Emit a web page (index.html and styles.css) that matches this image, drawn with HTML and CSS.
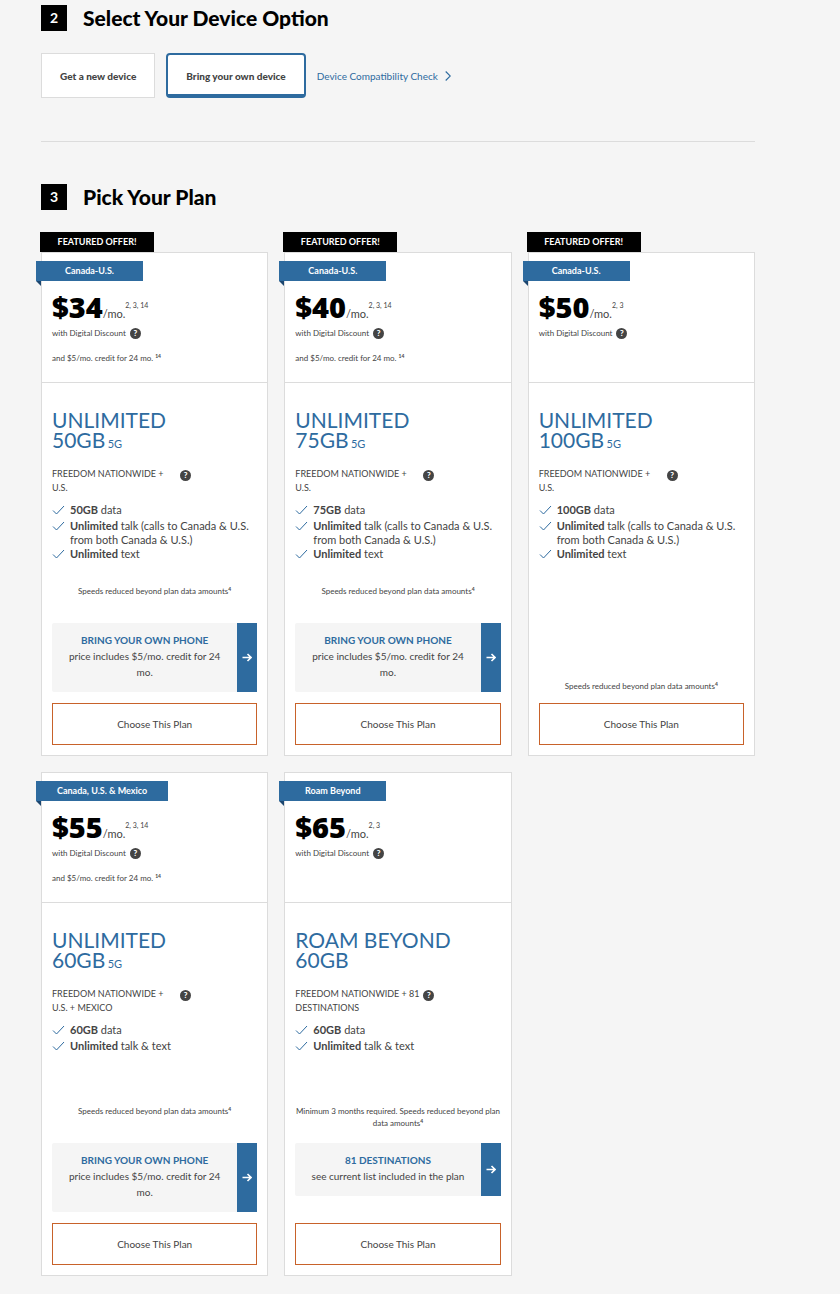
FILE: index.html
```html
<!DOCTYPE html>
<html lang="en">
<head>
    <meta charset="UTF-8">
    <meta name="viewport" content="width=device-width, initial-scale=1.0">
    <title>Pick Your Plan</title>
    <link rel="stylesheet" href="styles.css">
</head>
<body>
    <svg width="0" height="0" class="sprite" aria-hidden="true">
        <symbol id="check" viewBox="0 0 12 10"><path d="M0.5 5.5 L4 9 L11.5 1" fill="none" stroke="#2e6b9f" stroke-width="1"/></symbol>
        <symbol id="arrow" viewBox="0 0 10 9"><path d="M0.5 4.5 H9 M5.5 1 L9 4.5 L5.5 8" fill="none" stroke="#fff" stroke-width="1.6"/></symbol>
    </svg>
    <main class="page">
        <section class="device">
            <h2 class="step-title"><span class="step-number">2</span>Select Your Device Option</h2>
            <div class="device-options">
                <button class="device-btn">Get a new device</button>
                <button class="device-btn selected">Bring your own device</button>
                <a class="compat-link" href="#">Device Compatibility Check
                    <svg width="6" height="10" viewBox="0 0 6 10"><path d="M0.7 0.5 L5.3 5 L0.7 9.5" fill="none" stroke="#2e6b9f" stroke-width="1.1"/></svg>
                </a>
            </div>
        </section>

        <section class="plans">
            <h2 class="step-title"><span class="step-number">3</span>Pick Your Plan</h2>
            <div class="plan-grid">

                <div class="plan">
                    <div class="featured">FEATURED OFFER!</div>
                    <article class="card">
                        <div class="card-top">
                            <div class="ribbon">Canada-U.S.</div>
                            <div class="price"><strong>$34</strong><span>/mo.</span><sup>2, 3, 14</sup></div>
                            <div class="discount">with Digital Discount <button class="help" aria-label="About Digital Discount">?</button></div>
                            <div class="credit">and $5/mo. credit for 24 mo. <sup>14</sup></div>
                        </div>
                        <div class="card-body">
                            <h3 class="plan-name">UNLIMITED<br>50GB <small>5G</small></h3>
                            <div class="network"><span>FREEDOM NATIONWIDE + U.S.</span><button class="help" aria-label="About the network">?</button></div>
                            <ul class="features">
                                <li><svg><use href="#check"/></svg><span><b>50GB</b> data</span></li>
                                <li><svg><use href="#check"/></svg><span><b>Unlimited</b> talk (calls to Canada &amp; U.S. from both Canada &amp; U.S.)</span></li>
                                <li><svg><use href="#check"/></svg><span><b>Unlimited</b> text</span></li>
                            </ul>
                            <p class="note">Speeds reduced beyond plan data amounts<sup>4</sup></p>
                            <div class="promo-slot">
                                <a class="promo" href="#"><span class="promo-text"><b>BRING YOUR OWN PHONE</b>price includes $5/mo. credit for 24 mo.</span><span class="promo-arrow"><svg><use href="#arrow"/></svg></span></a>
                            </div>
                            <button class="choose">Choose This Plan</button>
                        </div>
                    </article>
                </div>

                <div class="plan">
                    <div class="featured">FEATURED OFFER!</div>
                    <article class="card">
                        <div class="card-top">
                            <div class="ribbon">Canada-U.S.</div>
                            <div class="price"><strong>$40</strong><span>/mo.</span><sup>2, 3, 14</sup></div>
                            <div class="discount">with Digital Discount <button class="help" aria-label="About Digital Discount">?</button></div>
                            <div class="credit">and $5/mo. credit for 24 mo. <sup>14</sup></div>
                        </div>
                        <div class="card-body">
                            <h3 class="plan-name">UNLIMITED<br>75GB <small>5G</small></h3>
                            <div class="network"><span>FREEDOM NATIONWIDE + U.S.</span><button class="help" aria-label="About the network">?</button></div>
                            <ul class="features">
                                <li><svg><use href="#check"/></svg><span><b>75GB</b> data</span></li>
                                <li><svg><use href="#check"/></svg><span><b>Unlimited</b> talk (calls to Canada &amp; U.S. from both Canada &amp; U.S.)</span></li>
                                <li><svg><use href="#check"/></svg><span><b>Unlimited</b> text</span></li>
                            </ul>
                            <p class="note">Speeds reduced beyond plan data amounts<sup>4</sup></p>
                            <div class="promo-slot">
                                <a class="promo" href="#"><span class="promo-text"><b>BRING YOUR OWN PHONE</b>price includes $5/mo. credit for 24 mo.</span><span class="promo-arrow"><svg><use href="#arrow"/></svg></span></a>
                            </div>
                            <button class="choose">Choose This Plan</button>
                        </div>
                    </article>
                </div>

                <div class="plan">
                    <div class="featured">FEATURED OFFER!</div>
                    <article class="card">
                        <div class="card-top">
                            <div class="ribbon">Canada-U.S.</div>
                            <div class="price"><strong>$50</strong><span>/mo.</span><sup>2, 3</sup></div>
                            <div class="discount">with Digital Discount <button class="help" aria-label="About Digital Discount">?</button></div>
                        </div>
                        <div class="card-body">
                            <h3 class="plan-name">UNLIMITED<br>100GB <small>5G</small></h3>
                            <div class="network"><span>FREEDOM NATIONWIDE + U.S.</span><button class="help" aria-label="About the network">?</button></div>
                            <ul class="features">
                                <li><svg><use href="#check"/></svg><span><b>100GB</b> data</span></li>
                                <li><svg><use href="#check"/></svg><span><b>Unlimited</b> talk (calls to Canada &amp; U.S. from both Canada &amp; U.S.)</span></li>
                                <li><svg><use href="#check"/></svg><span><b>Unlimited</b> text</span></li>
                            </ul>
                            <p class="note note-last">Speeds reduced beyond plan data amounts<sup>4</sup></p>
                            <button class="choose">Choose This Plan</button>
                        </div>
                    </article>
                </div>

                <div class="plan">
                    <article class="card">
                        <div class="card-top">
                            <div class="ribbon">Canada, U.S. &amp; Mexico</div>
                            <div class="price"><strong>$55</strong><span>/mo.</span><sup>2, 3, 14</sup></div>
                            <div class="discount">with Digital Discount <button class="help" aria-label="About Digital Discount">?</button></div>
                            <div class="credit">and $5/mo. credit for 24 mo. <sup>14</sup></div>
                        </div>
                        <div class="card-body">
                            <h3 class="plan-name">UNLIMITED<br>60GB <small>5G</small></h3>
                            <div class="network"><span>FREEDOM NATIONWIDE + U.S. + MEXICO</span><button class="help" aria-label="About the network">?</button></div>
                            <ul class="features">
                                <li><svg><use href="#check"/></svg><span><b>60GB</b> data</span></li>
                                <li><svg><use href="#check"/></svg><span><b>Unlimited</b> talk &amp; text</span></li>
                            </ul>
                            <p class="note">Speeds reduced beyond plan data amounts<sup>4</sup></p>
                            <div class="promo-slot">
                                <a class="promo" href="#"><span class="promo-text"><b>BRING YOUR OWN PHONE</b>price includes $5/mo. credit for 24 mo.</span><span class="promo-arrow"><svg><use href="#arrow"/></svg></span></a>
                            </div>
                            <button class="choose">Choose This Plan</button>
                        </div>
                    </article>
                </div>

                <div class="plan">
                    <article class="card">
                        <div class="card-top">
                            <div class="ribbon">Roam Beyond</div>
                            <div class="price"><strong>$65</strong><span>/mo.</span><sup>2, 3</sup></div>
                            <div class="discount">with Digital Discount <button class="help" aria-label="About Digital Discount">?</button></div>
                        </div>
                        <div class="card-body">
                            <h3 class="plan-name">ROAM BEYOND<br>60GB</h3>
                            <div class="network"><span>FREEDOM NATIONWIDE + 81 DESTINATIONS</span><button class="help" aria-label="About the network">?</button></div>
                            <ul class="features">
                                <li><svg><use href="#check"/></svg><span><b>60GB</b> data</span></li>
                                <li><svg><use href="#check"/></svg><span><b>Unlimited</b> talk &amp; text</span></li>
                            </ul>
                            <p class="note">Minimum 3 months required. Speeds reduced beyond plan data amounts<sup>4</sup></p>
                            <div class="promo-slot">
                                <a class="promo" href="#"><span class="promo-text"><b>81 DESTINATIONS</b>see current list included in the plan</span><span class="promo-arrow"><svg><use href="#arrow"/></svg></span></a>
                            </div>
                            <button class="choose">Choose This Plan</button>
                        </div>
                    </article>
                </div>

            </div>
        </section>
    </main>
</body>
</html>
```

FILE: styles.css
```css
* {
    box-sizing: border-box;
}

body {
    background-color: #f5f5f5;
    color: #444;
    font-family: Lato, "Open Sans", sans-serif;
    font-size: 11px;
    line-height: 14px;
    margin: 0;
}

button {
    font-family: inherit;
    color: inherit;
    cursor: pointer;
}

a {
    color: #2e6b9f;
    text-decoration: none;
}

sup {
    line-height: 0;
}

.sprite {
    display: block;
}

.page {
    margin: 0 85px 0 41px;
    padding: 5px 0 17px;
}

.step-title {
    display: flex;
    align-items: center;
    gap: 16px;
    margin: 0;
    color: #000;
    font-size: 21px;
    font-weight: 900;
    line-height: 26px;
}

.step-number {
    width: 26px;
    background-color: #000;
    color: #fff;
    font-size: 14px;
    font-weight: bold;
    text-align: center;
}

.device {
    padding-bottom: 43px;
    border-bottom: 1px solid #dcdcdc;
}

.device-options {
    display: flex;
    align-items: center;
    gap: 11px;
    margin-top: 22px;
}

.device-btn {
    height: 45px;
    padding: 0 18px;
    background-color: #fff;
    border: 1px solid #dcdcdc;
    font-size: 10px;
    font-weight: 900;
}

.device-btn.selected {
    padding: 2px 18px 0;
    border: 2px solid #2e6b9f;
    border-bottom-width: 4px;
    border-radius: 4px;
}

.compat-link {
    display: flex;
    align-items: center;
    gap: 7px;
    font-size: 10px;
}

.plans {
    padding-top: 42px;
}

.plan-grid {
    display: grid;
    grid-template-columns: repeat(3, 1fr);
    gap: 16px;
    margin-top: 22px;
}

.plan {
    display: flex;
    flex-direction: column;
}

.featured {
    align-self: flex-start;
    width: 114px;
    margin-left: -1px;
    background-color: #000;
    color: #fff;
    font-size: 9px;
    font-weight: bold;
    line-height: 20px;
    text-align: center;
}

.card {
    flex: 1;
    display: flex;
    flex-direction: column;
    background-color: #fff;
    border: 1px solid #dcdcdc;
}

.card-top {
    min-height: 130px;
    padding: 8px 10px;
    border-bottom: 1px solid #dcdcdc;
}

.ribbon {
    position: relative;
    width: fit-content;
    min-width: 107px;
    margin-left: -16px;
    padding: 0 21px;
    background-color: #2e6b9f;
    color: #fff;
    font-size: 9px;
    font-weight: bold;
    line-height: 20px;
    text-align: center;
}

/* folded corner under the ribbon */
.ribbon::after {
    content: "";
    position: absolute;
    top: 100%;
    left: 0;
    border-top: 5px solid #1c466f;
    border-left: 5px solid transparent;
}

.price {
    display: flex;
    align-items: baseline;
    margin-top: 12px;
}

.price strong {
    color: #000;
    font-family: "Open Sans", sans-serif;
    font-size: 29px;
    font-weight: 800;
    line-height: 28px;
}

.price sup {
    align-self: flex-start;
    font-size: 7px;
    line-height: 24px;
}

.discount {
    display: flex;
    align-items: center;
    gap: 4px;
    margin-top: 5px;
    font-size: 8px;
}

.help {
    flex: none;
    width: 11px;
    height: 11px;
    padding: 0;
    background-color: #444;
    border: 0;
    border-radius: 50%;
    color: #fff;
    font-size: 8px;
    font-weight: 900;
    line-height: 11px;
}

.credit {
    margin-top: 11px;
    font-size: 8px;
}

.credit sup,
.note sup {
    font-size: 5px;
    font-weight: bold;
    vertical-align: 3px;
}

.card-body {
    flex: 1;
    display: flex;
    flex-direction: column;
    padding: 27px 10px 10px;
}

.plan-name {
    margin: 0;
    color: #2e6b9f;
    font-size: 21px;
    font-weight: normal;
    line-height: 20px;
}

.plan-name small {
    margin-left: -3px;
    font-size: 11px;
    line-height: 0;
}

.network {
    display: flex;
    align-items: flex-start;
    margin-top: 17px;
    font-size: 9px;
}

.network span {
    width: 128px;
}

.network .help {
    margin-top: 3px;
}

.features {
    flex: 1;
    min-height: 60px;
    margin: 8px 0 0;
    padding: 0;
    list-style: none;
}

.features li {
    display: flex;
    gap: 5px;
    min-height: 16px;
}

.features svg {
    flex: none;
    width: 13px;
    height: 10px;
    margin-top: 2px;
}

.note {
    min-height: 24px;
    margin: 22px 0 14px;
    font-size: 8px;
    line-height: 12px;
    text-align: center;
}

.note-last {
    min-height: 12px;
    margin-bottom: 11px;
}

.promo-slot {
    min-height: 80px;
    padding-bottom: 11px;
}

.promo {
    display: flex;
    background-color: #f5f5f5;
    border-radius: 2px;
    color: #444;
    font-size: 10px;
    line-height: 16px;
}

.promo-text {
    flex: 1;
    padding: 9px 12px 12px;
    text-align: center;
}

.promo-text b {
    display: block;
    color: #2e6b9f;
}

.promo-arrow {
    flex: none;
    display: flex;
    align-items: center;
    justify-content: center;
    width: 20px;
    background-color: #2e6b9f;
}

.promo-arrow svg {
    width: 10px;
    height: 9px;
}

.choose {
    height: 42px;
    background-color: #fff;
    border: 1px solid #c8622a;
    font-size: 10px;
}
```
